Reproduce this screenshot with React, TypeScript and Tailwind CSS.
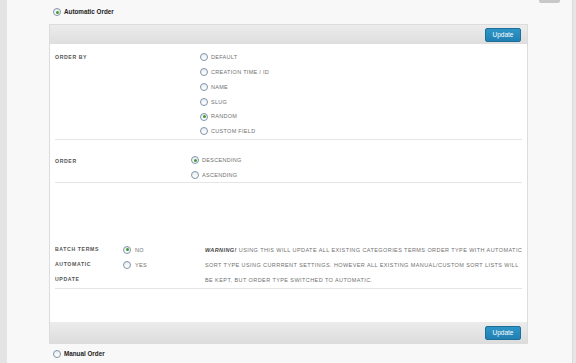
import React from "react";

function Radio({ checked = false }: { checked?: boolean }) {
  return (
    <span className="relative inline-flex h-[8px] w-[8px] shrink-0 items-center justify-center rounded-full border border-[#8193a8] bg-gradient-to-b from-[#e9eef3] to-white">
      {checked && <span className="h-[3px] w-[3px] rounded-full bg-[#3c9c32]" />}
    </span>
  );
}

function Opt({ label, checked = false }: { label: string; checked?: boolean }) {
  return (
    <div className="flex h-[14.8px] items-center gap-[3px]">
      <Radio checked={checked} />
      <span className="text-[5.5px] tracking-[0.3px] text-[#707070]">{label}</span>
    </div>
  );
}

function UpdateBtn() {
  return (
    <button className="flex h-[14px] w-[36px] items-center justify-center rounded-[2px] border border-[#1f6e98] bg-gradient-to-b from-[#2e95c7] to-[#2280b3] text-[6.5px] text-white">
      Update
    </button>
  );
}

export default function App() {
  return (
    <div
      className="flex h-[363px] w-[576px] overflow-hidden bg-[#f8f8f8]"
      style={{ fontFamily: '"Liberation Sans", Arial, sans-serif' }}
    >
      <div className="w-[7px] shrink-0 bg-[#e3e3e3]" />
      <div className="relative flex flex-1 flex-col">
        <div className="absolute right-[12px] top-0 h-[3px] w-[21px] rounded-b-[2px] bg-[#c8c8c8]" />
        <div className="flex h-[24px] shrink-0 items-center gap-[3px] pl-[46px]">
          <Radio checked />
          <span className="text-[6.3px] font-bold text-[#222]">Automatic Order</span>
        </div>
        <div className="ml-[42px] flex w-[479px] shrink-0 flex-col border border-[#dcdcdc]">
          <div className="flex h-[19px] shrink-0 items-center justify-end bg-gradient-to-b from-[#ececec] to-[#dedede] pr-[6px]">
            <UpdateBtn />
          </div>
          <div className="flex h-[278px] shrink-0 flex-col bg-white px-[5px]">
            <div className="flex border-b border-[#e5e5e5] pt-[6px]">
              <div className="w-[145px] shrink-0 pt-[4px] text-[5.2px] font-bold tracking-[0.6px] text-[#555]">ORDER BY</div>
              <div className="flex flex-col">
                <Opt label="DEFAULT" />
                <Opt label="CREATION TIME / ID" />
                <Opt label="NAME" />
                <Opt label="SLUG" />
                <Opt label="RANDOM" checked />
                <Opt label="CUSTOM FIELD" />
              </div>
            </div>
            <div className="mt-[13px] flex border-b border-[#e5e5e5]">
              <div className="w-[136px] shrink-0 pt-[5px] text-[5.2px] font-bold tracking-[0.6px] text-[#555]">ORDER</div>
              <div className="flex flex-col">
                <Opt label="DESCENDING" checked />
                <Opt label="ASCENDING" />
              </div>
            </div>
            <div className="mt-[59px] flex border-b border-[#e5e5e5] pb-[1px]">
              <div className="flex w-[68px] shrink-0 flex-col text-[5.2px] font-bold tracking-[0.6px] text-[#555]">
                <div className="flex h-[15px] items-center">BATCH TERMS</div>
                <div className="flex h-[15px] items-center">AUTOMATIC</div>
                <div className="flex h-[15px] items-center">UPDATE</div>
              </div>
              <div className="flex w-[82px] shrink-0 flex-col">
                <div className="flex h-[15px] items-center gap-[4px]">
                  <Radio checked />
                  <span className="text-[5.5px] tracking-[0.3px] text-[#707070]">NO</span>
                </div>
                <div className="flex h-[15px] items-center gap-[4px]">
                  <Radio />
                  <span className="text-[5.5px] tracking-[0.3px] text-[#707070]">YES</span>
                </div>
              </div>
              <div className="flex min-w-0 flex-col whitespace-nowrap text-[5.5px] tracking-[0.42px] text-[#707070]">
                <div className="flex h-[15px] items-center">
                  <span className="mr-[2px] font-bold italic text-[#444]">WARNING!</span>
                  USING THIS WILL UPDATE ALL EXISTING CATEGORIES TERMS ORDER TYPE WITH AUTOMATIC
                </div>
                <div className="flex h-[15px] items-center">
                  SORT TYPE USING CURRRENT SETTINGS. HOWEVER ALL EXISTING MANUAL/CUSTOM SORT LISTS WILL
                </div>
                <div className="flex h-[15px] items-center">BE KEPT, BUT ORDER TYPE SWITCHED TO AUTOMATIC.</div>
              </div>
            </div>
          </div>
          <div className="flex h-[21px] shrink-0 items-center justify-end bg-gradient-to-b from-[#ececec] to-[#dcdcdc] pr-[6px]">
            <UpdateBtn />
          </div>
        </div>
        <div className="flex h-[19px] shrink-0 items-center gap-[3px] pl-[46px]">
          <Radio />
          <span className="text-[6.3px] font-bold text-[#222]">Manual Order</span>
        </div>
      </div>
      <div className="w-[4px] shrink-0 border-l border-[#dadada] bg-[#e6e6e6]" />
    </div>
  );
}
